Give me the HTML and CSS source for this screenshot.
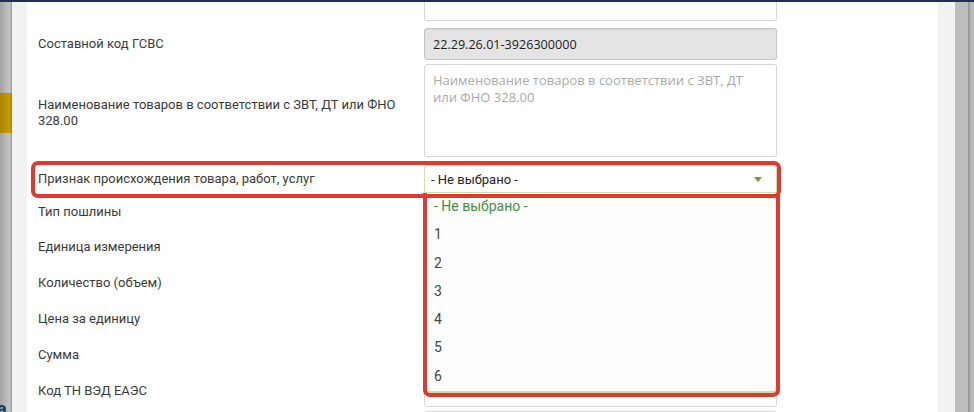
FILE: index.html
```html
<!DOCTYPE html>
<html lang="ru">
<head>
    <meta charset="UTF-8">
    <meta name="viewport" content="width=device-width, initial-scale=1.0">
    <title>Товарная позиция</title>
    <link rel="stylesheet" href="styles.css">
</head>
<body>
    <div class="topline"></div>
    <div class="screen">
        <!-- Затемнённая страница слева -->
        <div class="backdrop backdrop-left">
            <div class="banner"></div>
            <span class="backdrop-text">а</span>
        </div>

        <!-- Окно с формой -->
        <div class="modal">
            <div class="modal-body">
                <form class="form">
                    <div class="row row-cut">
                        <span class="label"></span>
                        <input class="field" type="text">
                    </div>
                    <div class="row">
                        <span class="label">Составной код ГСВС</span>
                        <input class="field field-readonly" type="text" value="22.29.26.01-3926300000" readonly>
                    </div>
                    <div class="row row-textarea">
                        <span class="label">Наименование товаров в соответствии с ЗВТ, ДТ или ФНО 328.00</span>
                        <textarea class="field field-area" placeholder="Наименование товаров в соответствии с ЗВТ, ДТ&#10;или ФНО 328.00"></textarea>
                    </div>
                    <div class="row row-select row-marked">
                        <span class="label">Признак происхождения товара, работ, услуг</span>
                        <div class="select-wrap">
                            <div class="select">
                                <span>- Не выбрано -</span>
                                <span class="arrow"></span>
                            </div>
                            <!-- Раскрытый список -->
                            <ul class="options">
                                <li class="selected">- Не выбрано -</li>
                                <li>1</li>
                                <li>2</li>
                                <li>3</li>
                                <li>4</li>
                                <li>5</li>
                                <li>6</li>
                            </ul>
                        </div>
                    </div>
                    <div class="row row-tight">
                        <span class="label">Тип пошлины</span>
                        <input class="field" type="text">
                    </div>
                    <div class="row">
                        <span class="label">Единица измерения</span>
                        <input class="field" type="text">
                    </div>
                    <div class="row">
                        <span class="label">Количество (объем)</span>
                        <input class="field" type="text">
                    </div>
                    <div class="row">
                        <span class="label">Цена за единицу</span>
                        <input class="field" type="text">
                    </div>
                    <div class="row">
                        <span class="label">Сумма</span>
                        <input class="field" type="text">
                    </div>
                    <div class="row">
                        <span class="label">Код ТН ВЭД ЕАЭС</span>
                        <input class="field" type="text">
                    </div>
                    <div class="row">
                        <span class="label"></span>
                        <input class="field" type="text">
                    </div>
                </form>
            </div>
        </div>

        <!-- Полоса прокрутки страницы -->
        <div class="backdrop backdrop-right"></div>
    </div>
</body>
</html>
```

FILE: styles.css
```css
body {
    margin: 0;
    overflow: hidden;
    font-family: Roboto, "Noto Sans", sans-serif;
    background: #bdbdbd;
}

/* Синяя полоса шапки сверху */
.topline {
    height: 2px;
    background: #1b3352;
}

.screen {
    display: flex;
    height: 410px;
}

/* Затемнённый фон */
.backdrop {
    flex: none;
    overflow: hidden;
}

.backdrop-left {
    width: 12px;
    display: flex;
    flex-direction: column;
    background: linear-gradient(to right, #a2a2a2, #c4c4c4 80%, #9a9a9a);
}

.banner {
    margin-top: 91px;
    height: 40px;
    background: linear-gradient(to right, #a98400, #c99b08 80%, #a88400);
}

.backdrop-text {
    margin-top: auto;
    margin-bottom: -7px;
    margin-left: -3px;
    font-size: 18px;
    font-weight: bold;
    line-height: 20px;
    color: #1c3a60;
}

.backdrop-right {
    width: 19px;
    background: linear-gradient(to right, #bdbdbd 0 13px, #9b9b9b 13px 15px, #bababa 15px);
}

/* Окно */
.modal {
    width: 943px;
    flex: none;
    box-sizing: border-box;
    padding: 0 17px 0 15px;
    background: #f2f2f2;
}

.modal-body {
    height: 100%;
    background: #fff;
    overflow: hidden;
}

.form {
    margin-top: -14px;
    padding-left: 11px;
}

/* Строка: подпись + поле */
.row {
    position: relative;
    width: 739px;
    display: grid;
    grid-template-columns: 386px 353px;
    align-items: center;
    margin-bottom: 4px;
}

.row-cut {
    margin-bottom: 7px;
}

.row-cut .field {
    height: 33px;
}

.row-textarea {
    margin-bottom: 8px;
}

.row-textarea .label {
    padding-top: 5px;
}

.row-select,
.row-tight {
    margin-bottom: 3px;
}

.label {
    padding-right: 10px;
    font-size: 13px;
    line-height: 16px;
    color: #3a3a3a;
}

.field {
    display: block;
    width: 353px;
    height: 32px;
    box-sizing: border-box;
    margin: 0;
    padding: 0 8px;
    border: 1px solid #d6d6d6;
    border-radius: 3px;
    background: #fff;
    font-family: "Open Sans", "DejaVu Sans", sans-serif;
    font-size: 12.6px;
    color: #1e1e1e;
}

.field-readonly {
    background: #e4e4e4;
    border-color: #c4c4c4;
    box-shadow: inset 0 1px 2px rgba(0, 0, 0, 0.06);
}

.field-area {
    height: 93px;
    padding: 7px 8px;
    font-size: 13px;
    line-height: 17px;
    resize: none;
}

.field-area::placeholder {
    color: #a9a9a9;
}

/* Выпадающий список */
.select-wrap {
    position: relative;
}

.select {
    height: 28px;
    box-sizing: border-box;
    display: flex;
    align-items: center;
    justify-content: space-between;
    padding: 0 14px 0 6px;
    border: 1px solid #c9e2ad;
    border-radius: 3px 3px 0 0;
    background: #fff;
    font-size: 13px;
    color: #222;
}

.arrow {
    width: 0;
    height: 0;
    border-left: 4px solid transparent;
    border-right: 4px solid transparent;
    border-top: 5px solid #6e9a3c;
}

.options {
    position: absolute;
    top: 100%;
    left: -1px;
    right: -3px;
    height: 204px;
    box-sizing: border-box;
    margin: 0;
    padding: 0 0 0 7px;
    list-style: none;
    background: #fdfdfd;
    border: 4px solid #e2392f;
    border-top: 0;
    border-radius: 0 0 7px 7px;
    box-shadow: inset 0 -2px 0 #c2e0a6;
    z-index: 2;
}

.options li {
    height: 28.3px;
    line-height: 27px;
    font-size: 14px;
    color: #444;
}

.options li.selected {
    color: #3f9142;
}

/* Красная рамка выделения строки */
.row-marked::after {
    content: "";
    position: absolute;
    top: -4px;
    right: -4px;
    bottom: -5px;
    left: -7px;
    border: 4px solid #e2392f;
    border-radius: 7px;
    pointer-events: none;
    z-index: 3;
}
```
